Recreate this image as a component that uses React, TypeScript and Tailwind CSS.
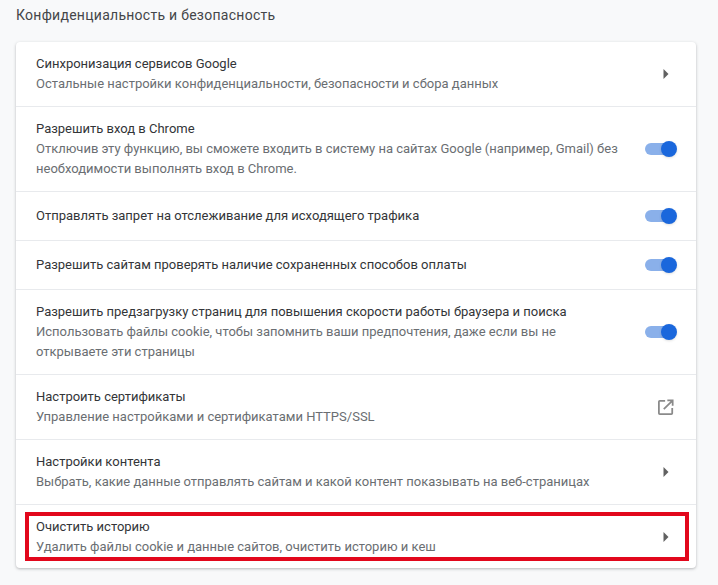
const Arrow = () => (
    <svg width="6" height="10" viewBox="0 0 6 10" className="shrink-0 text-[#616161]" fill="currentColor">
        <path d="M0.5 0L5.5 5L0.5 10z" />
    </svg>
);

const Toggle = () => (
    <div className="relative h-3 w-[31px] shrink-0 rounded-full bg-[#8ab0ea]">
        <div className="absolute -right-[1px] -top-[2px] h-4 w-4 rounded-full bg-[#1a67dc] shadow-sm" />
    </div>
);

const External = () => (
    <svg width="16" height="16" viewBox="0 0 18 18" className="shrink-0 text-[#8a8a8a]" fill="none" stroke="currentColor" strokeWidth="2">
        <path d="M8 2H2.0a1 1 0 0 0-1 1V16a1 1 0 0 0 1 1H15a1 1 0 0 0 1-1V10" />
        <path d="M6.5 11.5L16 2M10.5 1.5H16.5V7.5" />
    </svg>
);

const rows = [
    { h: 'h-[64px]', title: 'Синхронизация сервисов Google', lines: ['Остальные настройки конфиденциальности, безопасности и сбора данных'], icon: 'arrow' },
    { h: 'h-[85px]', title: 'Разрешить вход в Chrome', lines: ['Отключив эту функцию, вы сможете входить в систему на сайтах Google (например, Gmail) без', 'необходимости выполнять вход в Chrome.'], icon: 'toggle' },
    { h: 'h-[49px]', title: 'Отправлять запрет на отслеживание для исходящего трафика', lines: [], icon: 'toggle' },
    { h: 'h-[49px]', title: 'Разрешить сайтам проверять наличие сохраненных способов оплаты', lines: [], icon: 'toggle' },
    { h: 'h-[85px]', title: 'Разрешить предзагрузку страниц для повышения скорости работы браузера и поиска', lines: ['Использовать файлы cookie, чтобы запомнить ваши предпочтения, даже если вы не', 'открываете эти страницы'], icon: 'toggle' },
    { h: 'h-[65px]', title: 'Настроить сертификаты', lines: ['Управление настройками и сертификатами HTTPS/SSL'], icon: 'external' },
    { h: 'h-[65px]', title: 'Настройки контента', lines: ['Выбрать, какие данные отправлять сайтам и какой контент показывать на веб-страницах'], icon: 'arrow' },
    { h: 'h-[64px]', title: 'Очистить историю', lines: ['Удалить файлы cookie и данные сайтов, очистить историю и кеш'], icon: 'arrow' },
];

const App = () => {
    return (
        <div className="h-[585px] w-[718px] overflow-hidden bg-[#f8f9fa] px-4 pt-[5px] font-['Roboto',sans-serif] text-[13px]">
            <h2 className="h-[37px] text-[14px] leading-[20px] tracking-[0.27px] text-[#444649]">Конфиденциальность и безопасность</h2>
            <div className="relative w-[680px] rounded-[4px] bg-white shadow-[0_1px_3px_rgba(60,64,67,0.35)]">
                {rows.map((row, i) => (
                    <div key={row.title} className={`flex items-center justify-between pl-5 ${row.h} ${i > 0 ? 'border-t border-[#e8eaed]' : ''}`}>
                        <div className="leading-[20px]">
                            <div className="text-[#333538]">{row.title}</div>
                            {row.lines.map((line) => (
                                <div key={line} className="text-[#6a6e72]">{line}</div>
                            ))}
                        </div>
                        {row.icon === 'arrow' && <div className="mr-[27px]"><Arrow /></div>}
                        {row.icon === 'toggle' && <div className="mr-5"><Toggle /></div>}
                        {row.icon === 'external' && <div className="mr-[22px]"><External /></div>}
                    </div>
                ))}
                <div className="absolute bottom-[7px] left-[9px] h-[49px] w-[664px] border-4 border-[#e2071c]" />
            </div>
        </div>
    );
};

export default App;
